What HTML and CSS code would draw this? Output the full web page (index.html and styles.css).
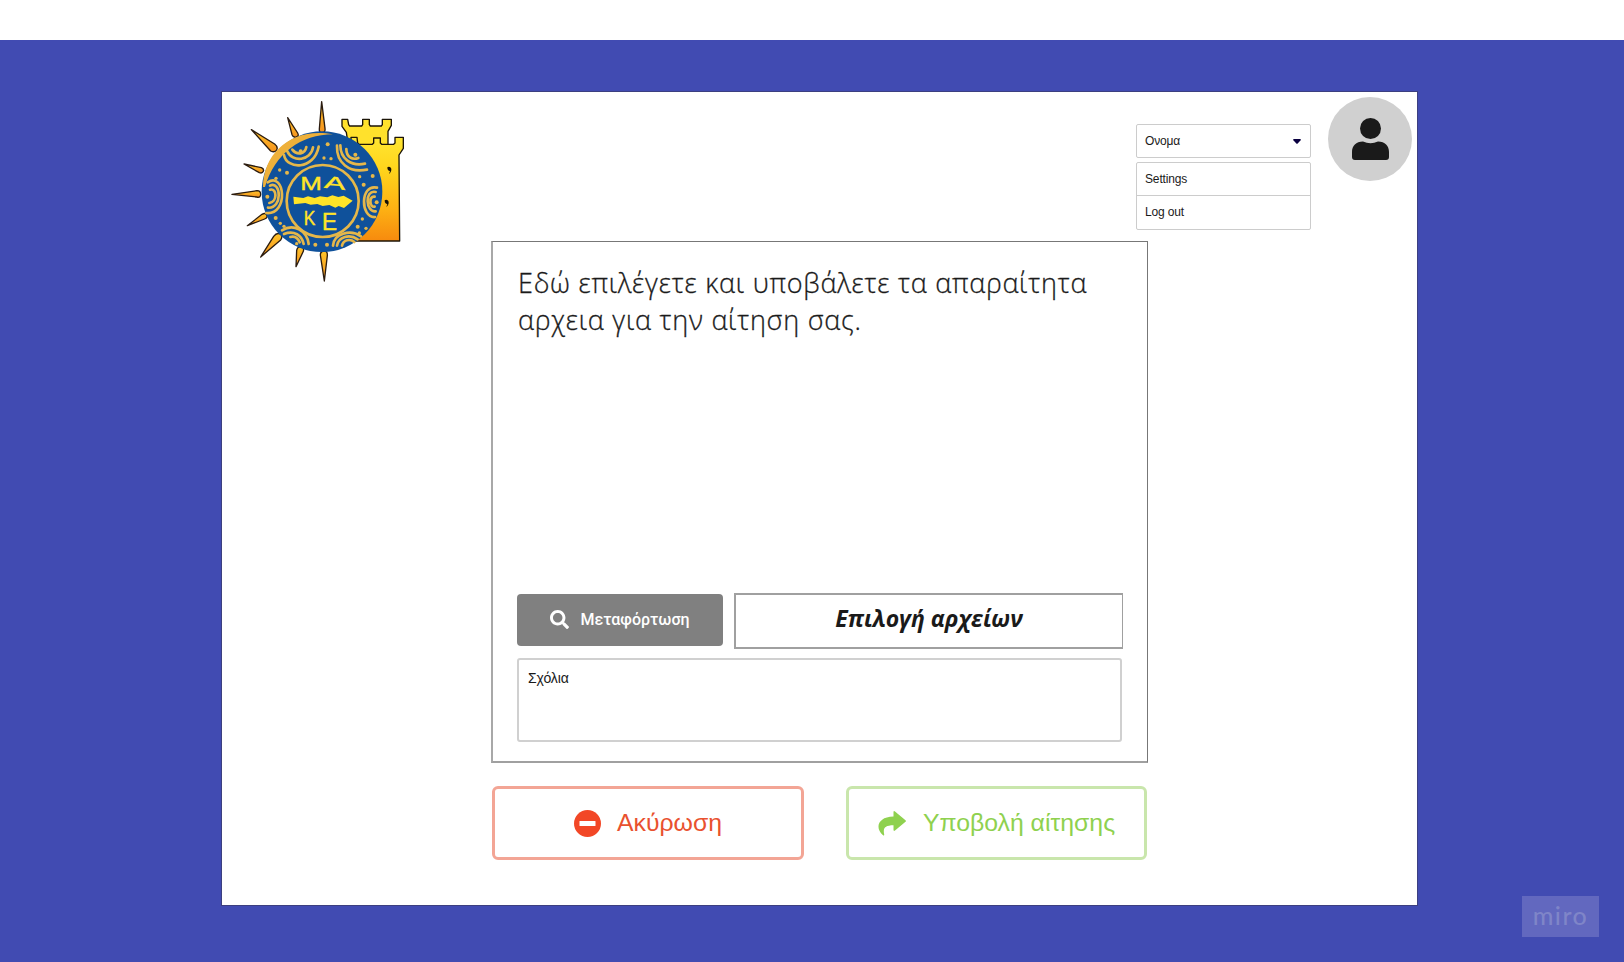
FILE: index.html
```html
<!DOCTYPE html>
<html lang="el">
<head>
<meta charset="utf-8">
<title>Υποβολή αίτησης</title>
<link rel="stylesheet" href="styles.css">
</head>
<body>
<div class="board">
  <main class="page">
    <header class="header">
      <svg class="logo" viewBox="21 21 600 585" fill="none">
        <defs>
          <linearGradient id="tower" x1="0" y1="0" x2="0" y2="1">
            <stop offset="0" stop-color="#ffe632"/><stop offset=".3" stop-color="#ffd51c"/><stop offset=".7" stop-color="#fdb013"/><stop offset="1" stop-color="#f78a0e"/>
          </linearGradient>
          <linearGradient id="ray" x1="0" y1="0" x2="0" y2="1">
            <stop offset="0" stop-color="#ffc52a"/><stop offset="1" stop-color="#f5921e"/>
          </linearGradient>
        </defs>
        <g stroke="#1c1508" stroke-width="4" stroke-linejoin="round">
          <path fill="#ffe12c" d="M381 103h17l3 16 3 4h36l3-4v-16h20v16l3 4h33l3-4v-16h27v18l-10 18v70H404l-10-67-13-18z"/>
          <path fill="url(#tower)" d="M408 157h18l2 17 4 4h40l4-4v-15h20v15l4 4h36l4-4v-17h25v33l-13 20 2 258H400V240l20-30-12-30z"/>
        </g>
        <path fill="#171006" d="M517 247c5-4 12 0 12 6s-2 10-7 14l3-9c-5 0-8-3-8-11zM509 346c5-4 12 0 12 6s-2 10-7 14l3-9c-5 0-8-3-8-11z"/>
        <g fill="url(#ray)" stroke="#2b1c10" stroke-width="4" stroke-linejoin="round">
          <path d="M320 50l10 80q2 12-8 13t-9-11z"/>
          <path d="M218 98l30 46q5 9-4 12t-13-7z"/>
          <path d="M109 134l70 43q11 9 6 18t-18 3z"/>
          <path d="M87 237l52 11q9 4 6 11t-12 4z"/>
          <path d="M51 328l75-11q11 0 11 11t-12 8z"/>
          <path d="M97 422l44-34q10-6 14 2t-6 12z"/>
          <path d="M137 516l39-62q9-12 19-7t2 18z"/>
          <path d="M243 545l2-49q3-12 13-11t7 14z"/>
          <path d="M328 588l-12-78q0-11 11-12t10 14z"/>
        </g>
        <circle cx="321" cy="320" r="181" fill="#0f519b"/>
        <path fill="#eeb03a" d="M144 306C145 200 235 125 354 148 258 148 180 205 150 306z"/>
        <g stroke="#e5b74a" stroke-width="8" stroke-linecap="round">
          <circle cx="323" cy="348" r="108" stroke-width="8"/>
          <path d="M207 210c8 44 90 46 104-25M216 197c16 38 72 30 78-10M232 194c14 18 38 14 42-8"/>
          <path d="M366 182c-2 52 36 83 90 72M376 181c0 40 32 64 74 55M394 192c0 24 18 34 36 27"/>
          <path d="M158 292c52-34 64 98-4 92M165 302c34-16 38 70-6 66M165 314c22-6 22 38-2 40"/>
          <path d="M486 308c-52-12-50 92-6 88M482 321c-34-8-30 62 0 58M479 335c-18-4-16 34 0 30"/>
          <path d="M201 436c34-22 75 0 80 41M207 447c30-12 54 4 59 30M226 456c16-4 24 6 28 16"/>
          <path d="M354 482c2-36 52-50 84-28M366 482c4-27 38-36 62-19M381 482c4-17 24-22 37-11"/>
        </g>
        <g fill="#e5b74a">
          <circle cx="257" cy="199" r="6"/><circle cx="338" cy="178" r="6"/><circle cx="327" cy="219" r="5"/><circle cx="348" cy="221" r="5"/>
          <circle cx="421" cy="209" r="6"/><circle cx="194" cy="255" r="5"/><circle cx="216" cy="263" r="6"/><circle cx="183" cy="280" r="5"/>
          <circle cx="157" cy="335" r="6"/><circle cx="182" cy="399" r="6"/><circle cx="196" cy="415" r="5"/><circle cx="207" cy="424" r="5"/>
          <circle cx="473" cy="273" r="6"/><circle cx="434" cy="275" r="5"/><circle cx="446" cy="299" r="6"/><circle cx="485" cy="352" r="6"/>
          <circle cx="442" cy="402" r="5"/><circle cx="428" cy="425" r="6"/><circle cx="453" cy="430" r="5"/><circle cx="433" cy="444" r="5"/>
          <circle cx="301" cy="479" r="6"/><circle cx="336" cy="479" r="6"/><circle cx="245" cy="476" r="5"/>
        </g>
        <path fill="#ffe428" d="M235 335l30 4 14-5 20 5 16-5 22 3 15-6 18 5 16-4 27 15-26 22-16-6-10 5-18-8-20 3-16-6-20 2-16-5-34 4z"/>
        <text class="logo-text" transform="translate(256 316) scale(1.5 1.1)">Μ</text>
        <text class="logo-text" transform="translate(326 308) rotate(6) scale(1.85 1)">Α</text>
        <text class="logo-text" transform="translate(266 420) scale(1 1.2)">Κ</text>
        <text class="logo-text" transform="translate(321 434) scale(1.3 1.35)">Ε</text>
      </svg>
      <nav class="account">
        <div class="select"><span>Ονομα</span>
          <svg class="caret" viewBox="0 0 8 5"><path d="M1 0h6q1.400 .2 .6 1.300L4.700 4.500q-.7 .7-1.400 0L.4 1.300Q-.4 .2 1 0z" fill="#0a0040"/></svg>
        </div>
        <ul class="menu"><li>Settings</li><li>Log out</li></ul>
      </nav>
      <div class="avatar">
        <svg viewBox="0 0 37 42"><circle cx="18.500" cy="10.500" r="10.500"/><path d="M11 23.500q7.500 3.500 15 0C33 23.500 37 28 37 34v5q0 3-3 3H3q-3 0-3-3v-5c0-6 4-10.500 11-10.500z"/></svg>
      </div>
    </header>
    <section class="form">
      <p class="intro">Εδώ επιλέγετε και υποβάλετε τα απαραίτητα<br>αρχεια για την αίτηση σας.</p>
      <div class="upload-row">
        <button class="upload">
          <svg viewBox="0 0 512 512"><path fill="#fff" d="M505 442.700 405.300 343c-4.500-4.500-10.600-7-17-7H372c27.600-35.300 44-79.700 44-128C416 93.100 322.900 0 208 0S0 93.100 0 208s93.100 208 208 208c48.300 0 92.700-16.400 128-44v16.300c0 6.400 2.500 12.500 7 17l99.700 99.700c9.400 9.400 24.600 9.400 33.900 0l28.300-28.300c9.400-9.400 9.400-24.600.1-34zM208 336c-70.700 0-128-57.200-128-128 0-70.700 57.200-128 128-128 70.700 0 128 57.200 128 128 0 70.700-57.200 128-128 128z"/></svg>
          <span>Μεταφόρτωση</span>
        </button>
        <div class="files"><span>Επιλογή αρχείων</span></div>
      </div>
      <div class="comments">Σχόλια</div>
    </section>
    <div class="actions">
      <button class="action cancel">
        <svg viewBox="0 0 27 27"><circle cx="13.500" cy="13.500" r="13.500" fill="#f24726"/><rect x="5.500" y="11" width="16" height="5" rx=".6" fill="#fff"/></svg>
        <span>Ακύρωση</span>
      </button>
      <button class="action submit">
        <svg viewBox="0 0 28 25"><path fill="#8fd14f" d="M15.500 1.200q0-1.800 1.500-.7l10.500 8.700q.9.800 0 1.600L17 19.600q-1.500 1-1.500-.8v-4.600C7 14.400 4.800 16.500 6.200 23.500q.2 1.500-1.200.7C-3.500 17 0 5.800 15.500 5.600z"/></svg>
        <span>Υποβολή αίτησης</span>
      </button>
    </div>
  </main>
  <div class="watermark">miro</div>
</div>
</body>
</html>
```
FILE: styles.css
```css
* { box-sizing: border-box; }
body { margin: 0; height: 962px; padding-top: 40px; overflow: hidden; background: #fff; font-family: "Liberation Sans", Arial, sans-serif; color: #1a1a1a; }
button { font: inherit; padding: 0; margin: 0; }
.board { position: relative; height: 922px; padding: 51px 0 0 221px; background: #414bb2; }
.page { width: 1197px; height: 815px; background: #fff; border: 1px solid #3c3f80; }
.header { display: flex; height: 148px; padding-right: 5px; align-items: flex-start; }
.logo { width: 200px; height: 195px; flex: none; }
.logo-text { font: 52px "Liberation Sans", Arial, sans-serif; fill: #ffe428; stroke: #ffe428; stroke-width: 1px; }
.account { width: 175px; margin: 32px 17px 0 auto; font-size: 12px; letter-spacing: -.15px; }
.select { display: flex; height: 34px; align-items: center; justify-content: space-between; padding: 0 9px 0 8px; border: 1px solid #ccc; border-radius: 2px; }
.caret { width: 8px; height: 5px; }
.menu { list-style: none; margin: 4px 0 0; padding: 0; border: 1px solid #ccc; border-radius: 2px; }
.menu li { height: 32px; line-height: 32px; padding-left: 8px; }
.menu li + li { height: 34px; border-top: 1px solid #ccc; }
.avatar { width: 84px; height: 84px; margin-top: 5px; border-radius: 50%; background: #d0d0d0; display: flex; justify-content: center; padding-top: 21px; }
.avatar svg { width: 37px; height: 42px; fill: #1a1a1a; }
.form { display: flex; flex-direction: column; width: 657px; height: 522px; margin: 1px 0 0 269px; padding: 22px 24px 19px; border: solid; border-width: 1px 1px 2px 2px; border-color: #777 #777 #a0a0a0 #a8a8a8; }
.intro { margin: 0 0 0 1px; font: 300 27px/37px "Open Sans", sans-serif; letter-spacing: .75px; -webkit-text-stroke: .3px #1a1a1a; white-space: nowrap; }
.upload-row { display: flex; gap: 11px; margin-top: auto; }
.upload { display: flex; align-items: center; justify-content: center; gap: 11px; width: 206px; height: 52px; margin-top: 1px; padding-bottom: 1px; border: 0; border-radius: 4px; background: #808080; color: #fff; font: 500 16px Roboto, sans-serif; }
.upload svg { width: 19px; height: 19px; }
.files { width: 389px; height: 56px; display: flex; justify-content: center; border: solid #a0a0a0; border-width: 2px 1px 2px 2px; font: italic 700 23px/46px "Open Sans", sans-serif; }
.comments { width: 605px; height: 84px; margin-top: 9px; padding: 10px 9px; border: 2px solid #d0d0d0; border-radius: 3px; font-size: 14px; line-height: 16px; letter-spacing: -.1px; }
.actions { display: flex; justify-content: space-between; width: 655px; margin: 23px 0 0 270px; }
.action { display: flex; align-items: center; justify-content: center; height: 74px; border: 3px solid; border-radius: 6px; background: #fff; font-size: 24.800px; white-space: nowrap; }
.action svg { flex: none; }
.action span { padding-bottom: 1px; }
.cancel { width: 312px; gap: 16px; border-color: #f3a595; color: #e9512f; }
.cancel svg { width: 27px; height: 27px; }
.submit { width: 301px; gap: 17px; border-color: #c9e6ac; color: #8fd14f; }
.submit svg { width: 28px; height: 25px; }
.watermark { position: absolute; right: 25px; bottom: 25px; width: 77px; height: 41px; background: #6268bf; color: #7f85c8; text-align: center; font: 500 25px/38px Lato, sans-serif; letter-spacing: 1.500px; }
```
